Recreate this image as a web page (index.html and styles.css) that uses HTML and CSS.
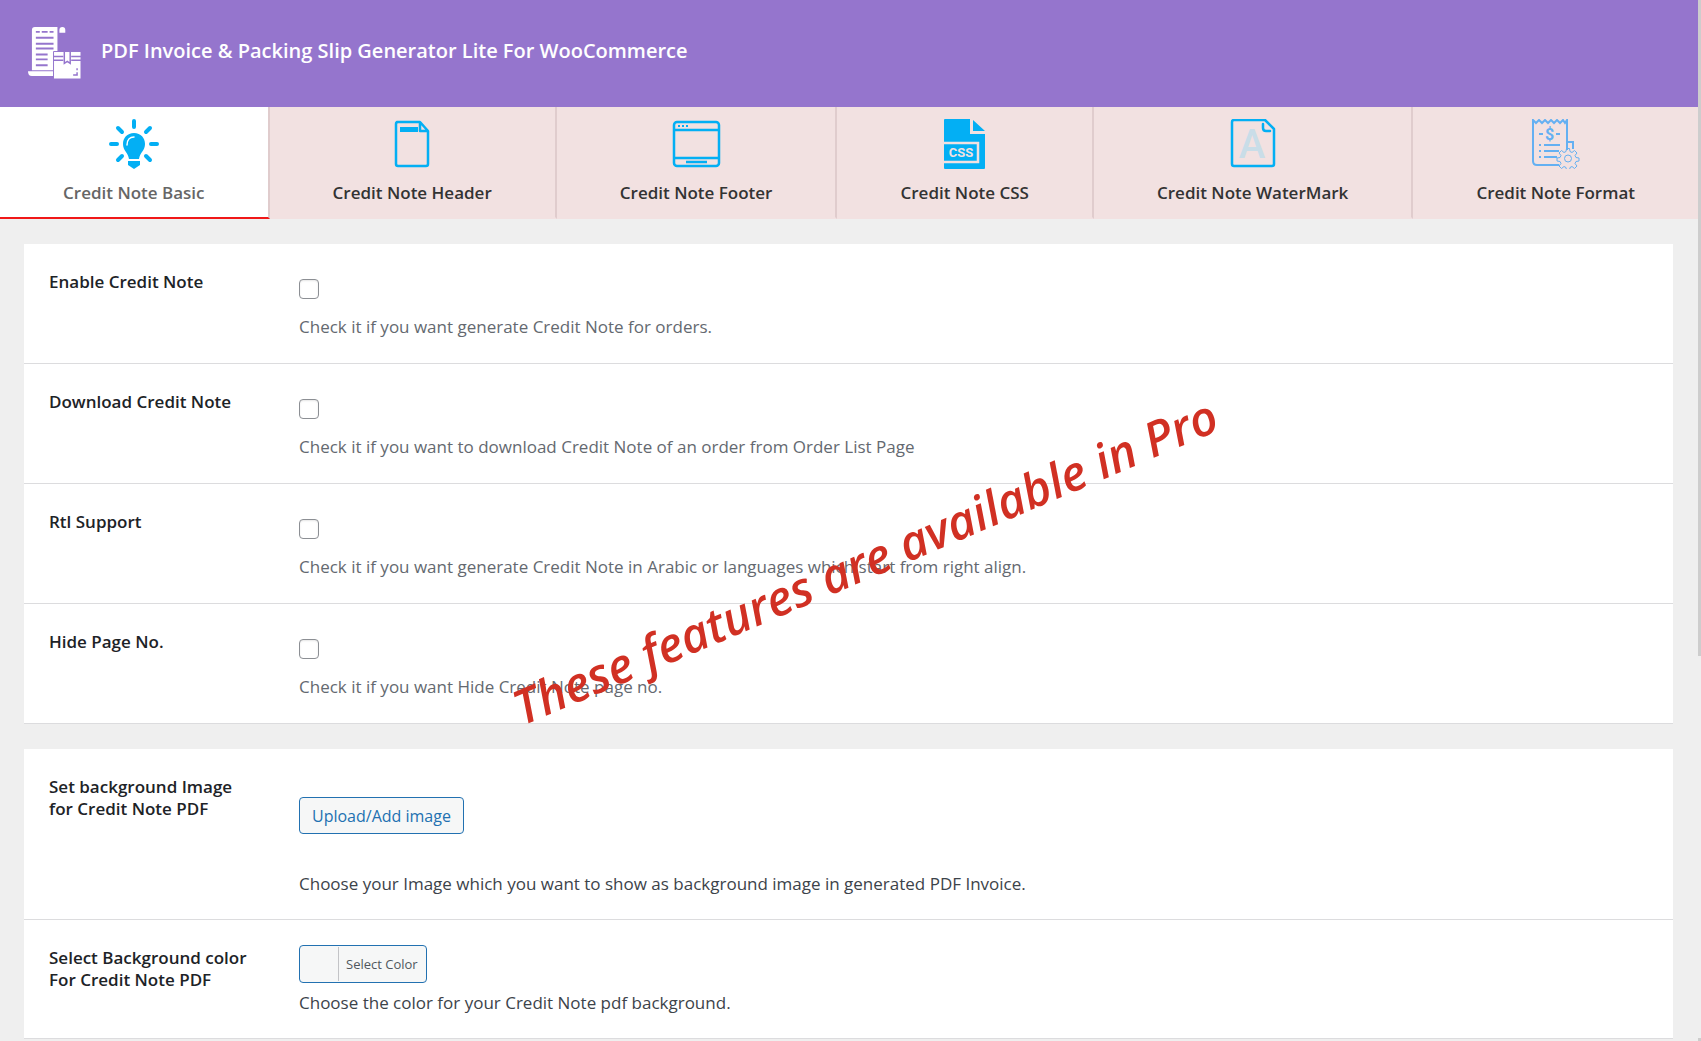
FILE: index.html
```html
<!DOCTYPE html>
<html lang="en">
<head>
<meta charset="utf-8">
<meta name="viewport" content="width=device-width, initial-scale=1">
<title>PDF Invoice &amp; Packing Slip Generator Lite For WooCommerce</title>
<link rel="stylesheet" href="styles.css">
</head>
<body>
<div class="page">
  <header class="header">
    <svg class="header-logo" viewBox="0 0 54 54" aria-hidden="true">
      <path fill="#fff" d="M5 1h25v26h-4v18H4V4q0-3 3-3zM32 7V4q0-3 3-3t3 3v3zM0 46h26v5H4q-4 0-4-5z"/>
      <path stroke="#9575cd" stroke-width="2" d="M8 6h4M14 6h6M22 6h4M8 12h18M8 18h18M8 23h18M8 29h12M8 34h12M8 40h12"/>
      <path fill="#fff" stroke="#9575cd" d="M26 26h28v28H26z"/>
      <path stroke="#9575cd" stroke-width="1.5" d="M26 31h10M44 31h10M26 35h10M44 35h10"/>
      <path fill="none" stroke="#9575cd" stroke-width="1.500" d="M37 26v12l3-2 3 2V26M50 43v2M50 47v3h-4"/>
    </svg>
    <h1 class="header-title">PDF Invoice &amp; Packing Slip Generator Lite For WooCommerce</h1>
  </header>

  <nav class="tabs" aria-label="Credit note settings">
    <a class="tab tab-active" href="#basic" aria-current="page">
      <svg class="tab-icon" viewBox="0 0 50 50" aria-hidden="true">
        <path stroke="#03aff4" stroke-width="4" stroke-linecap="round" d="M25 2v6M2 25h6M42 25h6M9 9l4 4M41 9l-4 4M9 41l4-4M41 41l-4-4"/>
        <path fill="#03aff4" d="M25 14c-7 0-11 5-11 11 0 7 5 8 6 15h10c1-7 6-8 6-15 0-6-4-11-11-11zM19 42h12v4l-3 2-3 2-3-2-3-2z"/>
        <path fill="none" stroke="#fff" stroke-width="1.500" stroke-linecap="round" d="M18 26c0-5 3-8 7-8"/>
      </svg>
      <span>Credit Note Basic</span>
    </a>
    <a class="tab" href="#header">
      <svg class="tab-icon" viewBox="0 0 50 50" aria-hidden="true">
        <path fill="none" stroke="#03aff4" stroke-width="2.500" stroke-linejoin="round" d="M10 3h23l8 9v33q0 2-2 2H11q-2 0-2-2V5q0-2 2-2zM33 3v9h8"/>
        <path fill="#03aff4" d="M13 8h18v5H13z"/>
      </svg>
      <span>Credit Note Header</span>
    </a>
    <a class="tab" href="#footer">
      <svg class="tab-icon" viewBox="0 0 50 50" aria-hidden="true">
        <rect x="3" y="3" width="45" height="44" rx="3" fill="none" stroke="#03aff4" stroke-width="2.500"/>
        <path stroke="#03aff4" stroke-width="2.500" d="M3 11h45M3 39h45M15 43h21"/>
        <path stroke="#03aff4" stroke-width="2" d="M7 7h2M11 7h2M15 7h2"/>
      </svg>
      <span>Credit Note Footer</span>
    </a>
    <a class="tab" href="#css">
      <svg class="tab-icon" viewBox="0 0 50 50" aria-hidden="true">
        <path fill="#03aff4" d="M5 0h25v15h15v34q0 1-1 1H5q-1 0-1-1V1q0-1 1-1zM33 1l12 11H33z"/>
        <path fill="none" stroke="#f2e1e1" stroke-width="2.500" d="M4 24h34v19H4"/>
        <text class="icon-css" x="21" y="38" text-anchor="middle">CSS</text>
      </svg>
      <span>Credit Note CSS</span>
    </a>
    <a class="tab" href="#watermark">
      <svg class="tab-icon" viewBox="0 0 50 50" aria-hidden="true">
        <path fill="none" stroke="#03aff4" stroke-width="2.500" stroke-linejoin="round" d="M6 1h31l9 9v35q0 2-2 2H6q-2 0-2-2V3q0-2 2-2z"/>
        <path fill="none" stroke="#03aff4" stroke-width="2.500" stroke-linecap="round" d="M35 5v4q0 3 3 3h4"/>
        <text class="icon-a" x="24" y="39" text-anchor="middle">A</text>
      </svg>
      <span>Credit Note WaterMark</span>
    </a>
    <a class="tab" href="#format">
      <svg class="tab-icon" viewBox="0 0 50 50" aria-hidden="true">
        <g fill="none" stroke="#64b0f2">
          <path stroke-width="2" d="M28 46H6q-4 0-4-4V1l3 3 3-3 3 3 3-3 3 3 3-3 3 3 3-3 3 3 3-3 2 3 2-3v30M35 23h7v7"/>
          <path stroke-width="2" d="M8 26h2M13 26h16M8 32h2M13 32h15M8 38h2M13 38h13M8 15h4M25 15h4"/>
          <circle cx="37" cy="39.500" r="3.500"/>
          <path d="M35.500 29.500h3l.5 3 2 1 2.500-2 2.500 2.500-2 2.500 1 2 3 .5v3l-3 .5-1 2 2 2.500-2.500 2.500-2.500-2-2 1-.5 3h-3l-.5-3-2-1-2.500 2-2.500-2.500 2-2.500-1-2-3-.5v-3l3-.5 1-2-2-2.500 2.500-2.500 2.500 2 2-1z"/>
        </g>
        <text class="icon-dollar" x="18.500" y="21" text-anchor="middle">$</text>
      </svg>
      <span>Credit Note Format</span>
    </a>
  </nav>

  <main class="content">
    <form class="settings">
      <section class="card">
        <div class="row">
          <label class="row-label" for="enable">Enable Credit Note</label>
          <div class="row-field">
            <input class="check" type="checkbox" id="enable">
            <p class="hint">Check it if you want generate Credit Note for orders.</p>
          </div>
        </div>
        <div class="row">
          <label class="row-label" for="download">Download Credit Note</label>
          <div class="row-field">
            <input class="check" type="checkbox" id="download">
            <p class="hint">Check it if you want to download Credit Note of an order from Order List Page</p>
          </div>
        </div>
        <div class="row">
          <label class="row-label" for="rtl">Rtl Support</label>
          <div class="row-field">
            <input class="check" type="checkbox" id="rtl">
            <p class="hint">Check it if you want generate Credit Note in Arabic or languages which start from right align.</p>
          </div>
        </div>
        <div class="row">
          <label class="row-label" for="pageno">Hide Page No.</label>
          <div class="row-field">
            <input class="check" type="checkbox" id="pageno">
            <p class="hint">Check it if you want Hide Credit Note page no.</p>
          </div>
        </div>
        <p class="pro-note">These features are available in Pro</p>
      </section>

      <section class="card">
        <div class="row row-image">
          <label class="row-label" for="image">Set background Image for Credit Note PDF</label>
          <div class="row-field">
            <button class="button" type="button" id="image">Upload/Add image</button>
            <p class="hint hint-dark">Choose your Image which you want to show as background image in generated PDF Invoice.</p>
          </div>
        </div>
        <div class="row row-color">
          <label class="row-label" for="color">Select Background color For Credit Note PDF</label>
          <div class="row-field">
            <button class="button color-button" type="button" id="color"><span class="color-text">Select Color</span></button>
            <p class="hint hint-dark">Choose the color for your Credit Note pdf background.</p>
          </div>
        </div>
      </section>
    </form>
  </main>
</div>
<div class="scroll-edge" aria-hidden="true"><div class="scroll-thumb"></div><div class="scroll-end"></div></div>
</body>
</html>
```
FILE: styles.css
```css
* { box-sizing: border-box; }

body {
  margin: 0;
  display: flex;
  min-height: 100vh;
  background: #efefef;
  color: #1d2327;
  font-family: "Open Sans", "Noto Sans", sans-serif;
  font-size: 17px;
  line-height: 22px;
}

p, h1 { margin: 0; }

.page { flex: 1; min-width: 0; }

.header {
  display: flex;
  align-items: flex-start;
  gap: 20px;
  padding: 26px 28px 28px;
  background: #9575cd;
}
.header-logo { width: 53px; height: 53px; }
.header-title {
  padding-top: 10px;
  color: #fff;
  font-size: 20px;
  font-weight: 600;
  line-height: 30px;
}

.tabs { display: flex; }
.tab {
  display: flex;
  flex: 1 1 auto;
  flex-direction: column;
  align-items: center;
  gap: 13px;
  padding: 12px 16px 13px;
  border-right: 2px solid #e0cccd;
  border-bottom: 2px solid #f2e1e1;
  background: #f2e1e1;
  color: #333;
  font-weight: 600;
  text-decoration: none;
}
.tab:last-child { border-right: 0; }
.tab-active {
  border-bottom-color: #f01818;
  background: #fff;
  color: #666;
}
.tab-icon { width: 50px; height: 50px; }
.icon-css { fill: #f2e1e1; font: bold 13px Roboto, sans-serif; }
.icon-a { fill: #c9dde8; font: 500 40px Roboto, sans-serif; }
.icon-dollar { fill: #64b0f2; font: bold 16px Roboto, sans-serif; }

.content { padding: 25px 25px 0 24px; }
.settings { display: grid; gap: 25px; }
.card { position: relative; background: #fff; }

.row {
  display: grid;
  grid-template-columns: 200px 1fr;
  gap: 50px;
  min-height: 120px;
  padding: 27px 25px 24px;
  border-bottom: 1px solid #dcdcde;
}
.row-label { font-weight: 600; }
.row-field {
  display: flex;
  flex-direction: column;
  align-items: flex-start;
  gap: 17px;
  padding-top: 8px;
}
.check {
  width: 20px;
  height: 20px;
  margin: 0;
  appearance: none;
  border: 1px solid #8c8f94;
  border-radius: 4px;
  background: #fff;
  box-shadow: inset 0 1px 2px rgba(0, 0, 0, .1);
}
.check:checked { background: #2271b1; }
.hint { color: #646970; }
.hint-dark { color: #3c434a; }

.button {
  height: 37px;
  padding: 0 12px;
  border: 1px solid #2271b1;
  border-radius: 4px;
  background: #f6f7f7;
  color: #2271b1;
  font: 16px "Open Sans", "Noto Sans", sans-serif;
}
.row-image { min-height: 171px; }
.row-image .row-field { gap: 39px; padding-top: 21px; }
.row-color { min-height: 119px; padding-top: 25px; }
.row-color .row-label { padding-top: 2px; }
.row-color .row-field { gap: 9px; padding: 0; }
.color-button {
  height: 38px;
  padding: 1px 0 1px 38px;
}
.color-text {
  display: block;
  padding: 0 8px 0 7px;
  border-left: 1px solid #c3c4c7;
  color: #50575e;
  font-size: 13px;
  line-height: 34px;
}

.pro-note {
  position: absolute;
  top: 66%;
  left: 51%;
  color: #d13023;
  font-size: 48px;
  font-style: italic;
  font-weight: 600;
  line-height: 60px;
  white-space: nowrap;
  transform: translate(-50%, -50%) rotate(-23deg);
}

.scroll-edge {
  display: flex;
  flex-direction: column;
  width: 3px;
}
.scroll-thumb { height: 63vh; background: #cdcdcd; }
.scroll-end { height: 3px; margin-top: auto; background: #cdcdcd; }
```
